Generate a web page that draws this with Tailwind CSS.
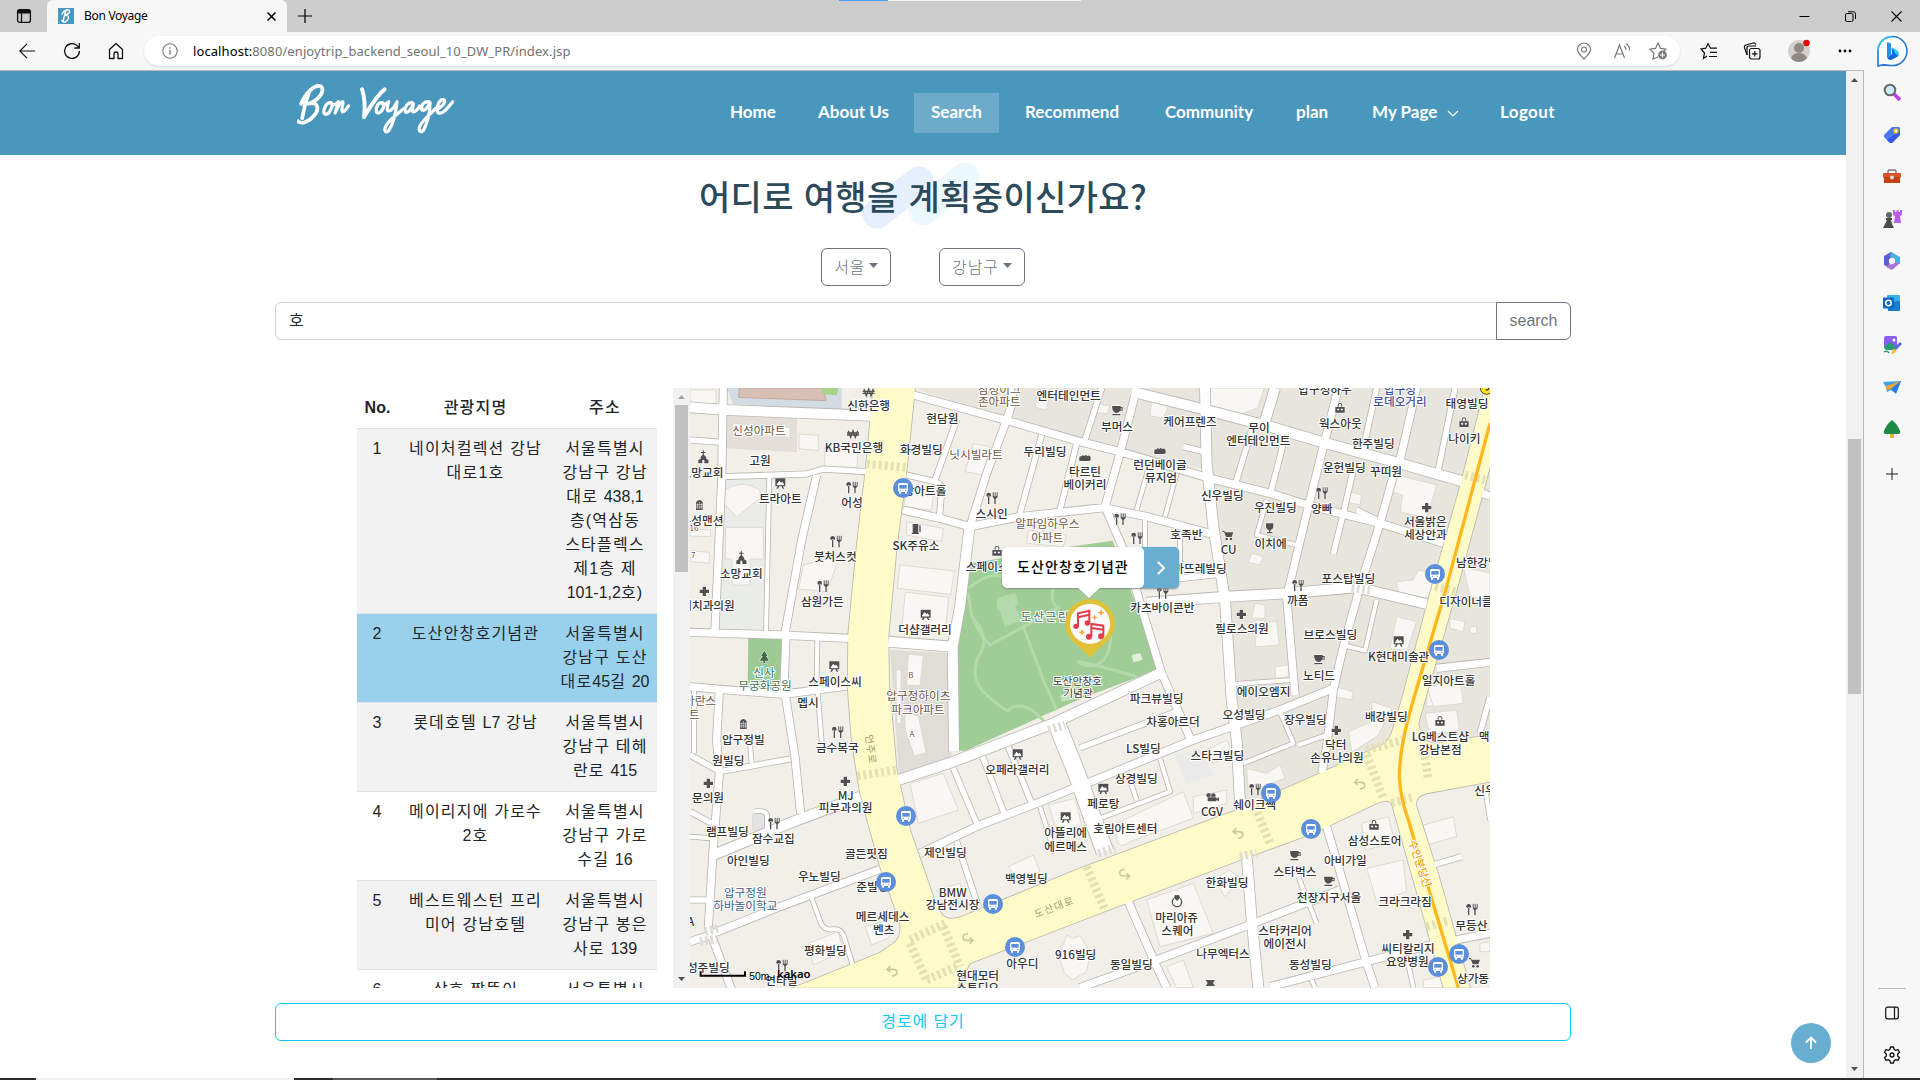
<!DOCTYPE html>
<html lang="ko">
<head>
<meta charset="utf-8">
<title>Bon Voyage</title>
<script src="https://cdn.jsdelivr.net/npm/@tailwindcss/browser@4"></script>
</head>
<body class="w-[1920px] h-[1080px] overflow-hidden bg-white flex flex-col font-['Liberation_Sans','Noto_Sans_CJK_KR',sans-serif] text-[#212529]">

<!-- tab strip -->
<div class="relative h-8 shrink-0 bg-[#cdcdcd] flex items-stretch">
  <div class="w-[47px] flex items-center justify-center">
    <svg class="w-4 h-4" viewBox="0 0 16 16" fill="none" stroke="#111" stroke-width="1.3"><rect x="1.6" y="1.6" width="12.8" height="12.8" rx="2"/><path d="M2 3h12M2 4.5h12" stroke-width="2"/><path d="M5.5 5v9"/></svg>
  </div>
  <div class="w-[240px] bg-[#f7f7f7] rounded-t-md flex items-center pl-[11px] pr-[11px]">
    <div class="w-4 h-4 bg-[#4897bf] flex items-center justify-center">
      <svg class="w-4 h-4" viewBox="0 0 16 16" fill="none" stroke="#fff" stroke-width="1.4" stroke-linecap="round"><path d="M8 2 5 13M4 6C6 2 12 0 11.500 4 11 6 8 7 7 7.500c5-1 4 4 1 6-2 1-4 0-4-1"/></svg>
    </div>
    <span class="ml-[10px] text-[12px] tracking-[-0.3px] font-['Noto_Sans',sans-serif] text-black">Bon Voyage</span>
    <svg class="ml-auto w-[9px] h-[9px]" viewBox="0 0 9 9" stroke="#000" stroke-width="1.5"><path d="M.5.500l8 8M8.500.500l-8 8"/></svg>
  </div>
  <div class="w-[35px] flex items-center justify-center"><svg class="w-[14px] h-[14px]" viewBox="0 0 14 14" stroke="#000" stroke-width="1.200"><path d="M7 0v14M0 7h14"/></svg></div>
  <div class="absolute left-[839px] top-0 flex h-px"><div class="w-[49px] bg-[#4a9df0]"></div><div class="w-[193px] bg-[#f3f3f3]"></div></div>
  <div class="ml-auto flex items-center gap-[35px] pr-[18px]">
    <svg class="w-[11px] h-[11px]" viewBox="0 0 11 11" stroke="#000"><path d="M.5 5.500h10"/></svg>
    <svg class="w-[11px] h-[11px]" viewBox="0 0 11 11" fill="none" stroke="#000"><rect x=".5" y="2.500" width="7.500" height="8" rx="1.500"/><path d="M3 .8h5.500q2 0 2 2V8"/></svg>
    <svg class="w-[11px] h-[11px]" viewBox="0 0 11 11" stroke="#000" stroke-width="1.100"><path d="M.5.500l10 10M10.500.500l-10 10"/></svg>
  </div>
</div>

<div class="flex flex-1 min-h-0">
<div class="w-[1864px] flex flex-col">
  <!-- address bar -->
  <div class="h-[38px] shrink-0 bg-[#f7f7f7] flex items-center pl-[19px]">
    <svg class="w-4 h-4" viewBox="0 0 16 16" fill="none" stroke="#111" stroke-width="1.200"><path d="M16 8H.8M8 .8.800 8l7.200 7.200"/></svg>
    <svg class="w-[18px] h-[18px] ml-[28px]" viewBox="0 0 18 18" fill="none" stroke="#111" stroke-width="1.300"><path d="M16.400 9A7.400 7.400 0 1 1 14 3.600l2 2M16.300 1v5h-5"/></svg>
    <svg class="w-4 h-[18px] ml-[27px]" viewBox="0 0 16 18" fill="none" stroke="#111" stroke-width="1.300"><path d="M1.500 7.500 8 1.500l6.500 6V16.500H10v-5q0-1.500-2-1.500t-2 1.500v5H1.500Z" stroke-linejoin="round"/></svg>
    <div class="ml-[20px] h-[30px] w-[1536px] bg-white rounded-full flex items-center pl-[18px] pr-[13px] shadow-sm">
      <svg class="w-4 h-4" viewBox="0 0 16 16" fill="none" stroke="#777" stroke-width="1.100"><circle cx="8" cy="8" r="7.200"/><path d="M8 7v4.500M8 4.300v1.400" stroke-width="1.400"/></svg>
      <div class="ml-[15px] text-[13px] font-['Noto_Sans',sans-serif] text-[#727272] tracking-[0.09px] pt-px"><span class="text-black">localhost:</span>8080/enjoytrip_backend_seoul_10_DW_PR/index.jsp</div>
      <svg class="ml-auto w-4 h-[18px]" viewBox="0 0 16 18" fill="none" stroke="#777" stroke-width="1.200"><path d="M8 17C4 13 1.500 10.500 1.500 7.500a6.500 6.500 0 0 1 13 0C14.500 10.500 12 13 8 17Z"/><circle cx="8" cy="7.500" r="2.500"/></svg>
      <svg class="ml-[21px] w-[18px] h-[18px]" viewBox="0 0 18 18" fill="none" stroke="#777" stroke-width="1.200"><path d="M1.500 16 6.500 3l5 13M3 12h7M11 4q2 1.500 2 4M13 1.500q4 2.500 3.500 7"/></svg>
      <svg class="ml-[18px] w-[18px] h-[18px]" viewBox="0 0 18 18" fill="none" stroke="#777" stroke-width="1.200"><path d="M9 15 4 17l1-5.500L1 7.200l5.500-.8L9 1l2.500 5.400 5.500.8-2 2"/><circle cx="13.500" cy="13" r="4.400" fill="#777" stroke="none"/><path d="M13.500 10.500v5M11 13h5" stroke="#fff"/></svg>
    </div>
    <svg class="ml-[20px] w-[18px] h-[18px]" viewBox="0 0 18 18" fill="none" stroke="#111" stroke-width="1.200"><path d="M7 14 3.500 16.500l1-5.500L1 7l4.800-.8L8 1.500l2.500 4.700h6.500M10 10.300h7M9 14.500h8"/></svg>
    <svg class="ml-[25px] w-[18px] h-[18px]" viewBox="0 0 18 18" fill="none" stroke="#111" stroke-width="1.200"><path d="M4 13 1.500 5.500Q1 3.500 3 3l7-2q2-.5 2.700 1.500"/><path d="M4 13V6q0-2 2-2h7"/><rect x="6.500" y="6.500" width="10.500" height="10.500" rx="2"/><path d="M11.800 9v5.500M9 11.800h5.500"/></svg>
    <svg class="ml-[26px] w-[24px] h-[24px]" viewBox="0 0 24 24"><circle cx="12" cy="12" r="11" fill="#d4d0cc"/><circle cx="12" cy="9" r="5" fill="#8e8984"/><path d="M4 19q2-5 8-5t8 5q-3 4-8 4t-8-4Z" fill="#8e8984"/><circle cx="19.500" cy="4" r="3.300" fill="#e00b0b"/></svg>
    <svg class="ml-[27px] w-[14px] h-1" viewBox="0 0 14 4"><circle cx="2" cy="2" r="1.400"/><circle cx="7" cy="2" r="1.400"/><circle cx="12" cy="2" r="1.400"/></svg>
  </div>

  <div class="flex flex-1 min-h-0 border-t border-r border-[#b9b9b9]">
    <!-- page -->
    <div class="relative w-[1846px] bg-white flex flex-col items-center">
      <header class="h-[84px] w-full shrink-0 bg-[#4a97be] flex items-center pl-[297px] text-white">
        <svg class="w-[165px] h-[56px] -mt-[2px]" viewBox="0 0 160 54" fill="none" stroke="#fff" stroke-width="3.100" stroke-linecap="round" stroke-linejoin="round">
          <path d="M12 7Q7 20 5 33M4 19C8 9 17 0 23 2c5 4-2 14-12 17C21 16 22 25 16 31 11 37 4 39 1 36" stroke-width="3.600"/>
          <path d="M33 18c-4-1-7 5-7 9 0 3 4 3 6-1 2-3 3-7 1-8 1 3 5 2 7-1-1 4-2 8-3 11 2-5 4-10 7-11 2 0-2 9 0 10 2 0 4-3 6-6"/>
          <path d="M63 5c3 8 3 18 2 27C71 22 77 11 85 5" stroke-width="3.800"/>
          <path d="M82 18c-4 0-6 6-5 9 2 3 7-2 7-6 0-2-1-3-2-3 2 3 5 1 7-1-2 5-2 9 0 9 3 0 6-5 8-9-1 10-4 22-8 28-3 3-5 0-3-4 3-7 12-12 17-17"/>
          <path d="M112 18c-5-1-8 5-7 9 3 2 6-4 8-8-1 4-2 8 0 8 3-1 5-4 6-6M128 17c-5-1-8 4-7 8 3 2 6-3 8-7 0 10-3 20-6 26-2 4-6 2-4-3 3-7 11-12 16-18M137 24c5-3 8-8 5-9-4-1-8 9-5 13 4 2 10-6 14-11"/>
        </svg>
        <nav class="flex items-center font-bold text-[17px] font-['Lato','Liberation_Sans',sans-serif] whitespace-nowrap ml-[252px] h-10">
          <a class="w-[104px] pl-4 -mt-[2px]">Home</a>
          <a class="w-[96px] -mt-[2px]">About Us</a>
          <a class="w-[85px] h-10 flex items-center justify-center bg-white/20 pb-[2px]">Search</a>
          <a class="w-[166px] pl-[26px] -mt-[2px]">Recommend</a>
          <a class="w-[131px] -mt-[2px]">Community</a>
          <a class="w-[76px] -mt-[2px]">plan</a>
          <a class="w-[128px] flex items-center gap-[10px] -mt-[2px]">My Page
            <svg class="w-3 h-2 mt-1" viewBox="0 0 12 8" fill="none" stroke="#fff" stroke-width="1.200"><path d="M1 1l5 5 5-5"/></svg></a>
          <a class="-mt-[2px] tracking-[.4px]">Logout</a>
        </nav>
      </header>

      <div class="relative mt-[17px] h-12 flex items-center justify-center">
        <svg class="absolute left-[160px] -top-[4px] w-[130px] h-[68px] overflow-visible" viewBox="0 0 130 68" stroke-linecap="round" stroke-width="29"><path d="M18 46 60 13" stroke="#e6effd"/><path d="M64 43 106 9" stroke="#e9f7fe" stroke-opacity=".9"/></svg>
        <h2 class="relative text-[34px] leading-[48px] font-medium tracking-[.35px] text-[#2c4a5a] whitespace-nowrap font-['Noto_Sans_CJK_KR',sans-serif]">어디로 여행을 계획중이신가요?</h2>
      </div>

      <div class="mt-[28px] flex gap-12 self-start ml-[821px] text-[#6c757d]">
        <button class="h-[38px] w-[70px] border border-[#6c757d] rounded-md flex items-center justify-center gap-1"><span class="font-light tracking-[.5px] -mt-[3px] font-['Noto_Sans_CJK_KR',sans-serif]">서울</span><svg class="w-[9px] h-[5px] -mt-[3px]" viewBox="0 0 9 5" fill="#6c757d"><path d="M0 0h9L4.500 5Z"/></svg></button>
        <button class="h-[38px] w-[86px] border border-[#6c757d] rounded-md flex items-center justify-center gap-1"><span class="font-light tracking-[.9px] -mt-[3px] font-['Noto_Sans_CJK_KR',sans-serif]">강남구</span><svg class="w-[9px] h-[5px] -mt-[3px]" viewBox="0 0 9 5" fill="#6c757d"><path d="M0 0h9L4.500 5Z"/></svg></button>
      </div>

      <div class="mt-4 w-[1296px] h-[38px] flex">
        <div class="flex-1 border border-[#ced4da] rounded-l-md pl-[13px] flex items-center">호</div>
        <div class="w-[75px] -ml-px border border-[#6c757d] text-[#6c757d] rounded-r-md flex items-center justify-center">search</div>
      </div>

      <div class="mt-12 flex w-[1133px] h-[600px] self-start ml-[357px]">
        <!-- places -->
        <div class="w-[300px] h-full overflow-hidden">
          <table class="w-[300px] table-fixed border-collapse text-center text-[16px] leading-6 tracking-[1.2px] whitespace-nowrap">
            <colgroup><col class="w-[41px]"><col class="w-[155px]"><col class="w-[104px]"></colgroup>
            <thead><tr class="h-[40px] border-b border-[#dee2e6]"><th class="tracking-normal">No.</th><th class="font-medium">관광지명</th><th class="font-medium">주소</th></tr></thead>
            <tbody class="align-top font-normal">
              <tr class="h-[185px] bg-[#f2f2f2] border-b border-[#dee2e6]"><td class="pt-2">1</td><td class="pt-2">네이처컬렉션 강남<br>대로1호</td><td class="pt-2">서울특별시<br>강남구 강남<br>대로 <span class="tracking-normal">438,1</span><br>층(역삼동<br>스타플렉스<br>제1층 제<br><span class="tracking-normal">101-1,2</span>호)</td></tr>
              <tr class="h-[89px] bg-[#99d1ec] border-b border-[#dee2e6]"><td class="pt-2">2</td><td class="pt-2">도산안창호기념관</td><td class="pt-2">서울특별시<br>강남구 도산<br>대로<span class="tracking-normal">45</span>길 <span class="tracking-normal">20</span></td></tr>
              <tr class="h-[89px] bg-[#f2f2f2] border-b border-[#dee2e6]"><td class="pt-2">3</td><td class="pt-2">롯데호텔 <span class="tracking-normal">L7</span> 강남</td><td class="pt-2">서울특별시<br>강남구 테헤<br>란로 <span class="tracking-normal">415</span></td></tr>
              <tr class="h-[89px] border-b border-[#dee2e6]"><td class="pt-2">4</td><td class="pt-2">메이리지에 가로수<br>2호</td><td class="pt-2">서울특별시<br>강남구 가로<br>수길 <span class="tracking-normal">16</span></td></tr>
              <tr class="h-[89px] bg-[#f2f2f2] border-b border-[#dee2e6]"><td class="pt-2">5</td><td class="pt-2">베스트웨스턴 프리<br>미어 강남호텔</td><td class="pt-2">서울특별시<br>강남구 봉은<br>사로 <span class="tracking-normal">139</span></td></tr>
              <tr class="h-[89px]"><td class="pt-2">6</td><td class="pt-2">상호 짬뚱이</td><td class="pt-2">서울특별시</td></tr>
            </tbody>
          </table>
        </div>
        <div class="ml-4 w-[17px] h-full bg-[#f1f1f1] flex flex-col items-center">
          <svg class="w-[17px] h-[17px]" viewBox="0 0 17 17" fill="#a3a3a3"><path d="M5 11h7L8.500 7Z"/></svg>
          <div class="w-[13px] h-[167px] bg-[#c1c1c1]"></div>
          <svg class="mt-auto w-[17px] h-[17px]" viewBox="0 0 17 17" fill="#505050"><path d="M5 6h7l-3.500 4Z"/></svg>
        </div>

        <!-- map -->
        <div class="relative w-[800px] h-[600px]">
        <svg class="w-[800px] h-[600px] block" viewBox="30 24 2400 1800">
          <defs>
            <g id="r12"><path d="M268 290 258 755M412 780l-2 120 15 185M210 1090l5 60M30 1370l65 5M395 1555l28 75q12 22 35 18 25-4 34 22l26 85M225 1294q40-6 36 20v55M1410 250l-40 140M1490 280l-35 130M1395 420v80M1500 470v120M1760 360l-30 105 120 30M2090 660l-35 152-55-14M1660 912l180-12M1800 995l40 95-150 60M1855 1095l85-30M1440 1135l30 100-210 80M1350 1200l20 60M1080 1280l35 110M1855 1490l55 140M42 920v200M2180 1730l20 93M1505 590l115-8M1895 1800l10 23M2415 1220l15 100"/></g>
            <g id="r16"><path d="M30 180l95 7M130 290l250-8 50-15 130 8M30 1125l90 50 210-38M30 1295l65 35M30 1560h60M830 120l-65 180M680 285l85 20q22 8 20 25l-7 85M1085 165l-65 235M1190 190l-50 200M1265 24l-50 156M1510 200l70 17M1715 150l-48 160M1810 190l-37 145M2090 24l-42 190M2325 24l-50 246M2022 260l-32 140-30 122M1200 1103l300-112M1320 615l300-32M820 1165l72 170M908 1130l66 175M985 1100l70 170M830 1385l65 195M2430 950l-30 110M2260 1455l85-25M1265 1345l-50-30M2090 420l-60-30"/></g>
            <g id="r22"><path d="M130 24 125 300 105 750M410 285 365 480 315 760M30 757l270 8 210 10M318 770l-6 150 33 210 17 170M30 920l90 8 190 15 190-25M118 930l-8 150 8 100-18 220-15 240 70 190M30 1685l45-15 225-90 300-112M700 45l275 75 225 65 120 30 270 80 180 45 130 40 200 50 190 60M990 24l10 35-20 61-60 160-50 160M670 390l110 25 90 25 150-30 260-28M1365 45l-45 175-45 160 60 140 110 360 90 205M1280 385l120 25 200 53M1975 24l-45 176-45 180-65 270 25 295M2210 24l-50 216M2145 270l-45 160-60 190-50 180-30 130-20 170-15 80M1220 1210l320-130 260-90 160-65M720 1420l180-85 170-65 110-45M1345 1565l85 195 30 63M1200 1823l230-83 290-110 260-100M1940 1340l50 170 70 240 25 73M1770 1820l290-75 190-50 180-35M2270 865l160-18M2405 340l25 8"/></g>
            <g id="r30"><path d="M30 82l110 8 435 17M100 1425l240-100 200-75M868 445l-28 235-22 120 4 315M625 785l195 15M655 1200l165-55 300-115 320-150M1575 24l5 226 20 190 35 220 20 300 15 120 10 190M1355 35l225 55 190 50 170 50 220 60 190 55M1785 24l-30 100M1400 668l240-18 180-10 210-18 210 50M1700 1425l15 195 20 203"/></g>
            <g id="r50"><path d="M1130 1030l60 150 50 140 35 95"/></g>
            <path id="vroad" d="M580 24 557 270 530 500 505 760 503 920 515 1080 540 1240 600 1460 658 1620Q670 1670 640 1690L600 1718 340 1823H830L870 1750 1260 1600 1680 1440 1900 1360 2090 1270Q2125 1255 2135 1270L2200 1500 2290 1823H2370L2280 1500 2208 1275Q2205 1250 2240 1240L2430 1205V1065L2270 1090Q2225 1095 2215 1030L2235 960 2330 630 2430 260V24H2415L2340 320 2250 640 2165 960 2135 1060Q2120 1095 2090 1102L1920 1180 1670 1290 1200 1465 850 1608Q800 1630 780 1595L760 1550 690 1350 650 1170 627 910 625 770 650 500 680 270 705 24Z"/>
            <g id="fk"><circle cx="-9" cy="-9" r="7"/><path d="M-11-5h4v23h-4ZM3-17h3v12h3v-12h3v12h3v-12h3v14l-6 6v15H8V3L3-3Z"/></g>
            <g id="cr"><path d="M-5-14H5v9h9V5H5v9H-5V5h-9V-5h9Z"/></g>
            <g id="ar"><path d="M-15-14H15V10H8l4 7H7L3 10H-3l-4 7h-5l4-7h-7Z"/><path d="M-10 5l7-10 5 6 4-3 4 7Z" fill="#fff"/></g>
            <g id="cf"><path d="M-15-14H11v3h6v11H9Q6 7-2 7q-12 0-13-21ZM11-7v4h3v-4ZM-14 10H10v4h-24Z" fill-rule="evenodd"/></g>
            <g id="bg"><path d="M-14-3H14V14H-14ZM-7-4v-4q0-7 7-7t7 7v4H4v-4q0-4-4-4t-4 4v4Z"/><path d="M-7 3h3v3h-3ZM4 3h3v3H4Z" fill="#fff"/></g>
            <g id="br"><path d="M-17 8q-2-16 7-13 2-6 8-1 5-6 8 0 10-4 11 6 1 9-5 9h-27Z"/></g>
            <g id="ch"><path d="M-1.500-20h3v5h5v3h-5v5l7 7v5l7 4v10H3V9h-6v10h-12V9l7-4V0l6-7v-5h-5v-3h5Z"/></g>
            <g id="bd"><path d="M-10 15V-8q10-14 20 0V15Z"/><path d="M-6-5v17M0-9v21M6-5v17M-10-1h20M-10 6h20" stroke="#fff" stroke-width="1.500"/></g>
            <g id="ct"><path d="M-17-14h6l2 5h25L11 5H-6L-12-10h-5Z"/><circle cx="-4" cy="11" r="4"/><circle cx="9" cy="11" r="4"/></g>
            <path id="wn" d="M-14-11-7 9 0-11 7 9 14-11M-18-4h36M-18 2h36" fill="none" stroke="#505050" stroke-width="4"/>
            <g id="bus"><circle r="30" fill="#5b8fdc"/><rect x="-15" y="-15" width="30" height="27" rx="5" fill="#fff"/><path d="M-11-9h22V2h-22Z" fill="#5b8fdc"/><path d="M-12 10h6v7h-6ZM6 10h6v7H6Z" fill="#fff"/><circle cx="-8" cy="7" r="2" fill="#5b8fdc"/><circle cx="8" cy="7" r="2" fill="#5b8fdc"/></g>
            <path id="ut" d="M-14-5H4Q17-5 16 5 15 14 1 15M-4-15-14-5-4 3" fill="none" stroke="#cfc99a" stroke-width="5"/>
          </defs>
          <rect x="30" y="24" width="2400" height="1800" fill="#f2efe9"/>
          <path d="M700 24H2430V1070L1680 1270 1635 660 1580 270 1330 215 985 120 900 90Z" fill="#e8e5dd"/>
          <path d="M140 24H485V90L160 72Z" fill="#d3dce3"/><path d="M178 24H430l8 38-262-10Z" fill="#d8c1b4" stroke="#c4a99a" stroke-width="3"/><path d="M425 24h50l-5 22-42-4Z" fill="#a7d487"/>
          <path d="M140 100l211 12v105L138 205Z" fill="#e3dfd8"/><path d="M132 300l133-8-8 460-142-8Z" fill="#e9ece8"/>
          <path d="M630 810l170 8 15 315-158 50Z" fill="#e0ddd5"/>
          <path d="M205 768l100 8-5 160-97-12Z" fill="#9dcb93"/>
          <path d="M1485 1130l75-25 40 80-80 26Z" fill="#e9eae9"/>

          <g fill="#f8f7f4" stroke="#dedad2" stroke-width="3">
            <path d="M30 30h78v40l-78 6ZM158 130l172 12v30l-172-9ZM357 162l58 4v46l-58-6ZM434 200l98 5v58l-98-4ZM135 330q50-35 105 0v25l-70 56-37-40ZM137 442h113v95h-40v78h-54v-78h-20ZM30 445l62 5v20l-62-2ZM30 512l58 5v32l-58-4ZM370 555l80-20 20 20-30 80-84-8ZM660 555l164 18-12 70-160-18ZM676 636l130 16-10 100-130-16ZM680 330l80 10-5 50-85-8ZM680 425l110 20-5 40-105-20ZM880 190l50 10-20 85-55-10ZM1070 50l35 10-5 30-35-8ZM1045 450l115 15-10 35-110-10ZM1250 70l40 8-10 24-32-6ZM1415 60l50 20-15 35-40-8Z"/>
            <path d="M1583 24h170l-20 60-60 22-90-25ZM2150 285l120 30-30 100-80-20 8-50-50-15ZM2010 335l35 10-5 30-35-8ZM1715 520l35 10-10 25-35-8ZM1725 670l30 5v40h-40ZM1725 720l65 5 8 70-72 6ZM1785 860l40-5v35l-38 5ZM2150 605l50-5 15-30 60 15-30 70-90-10ZM2150 710l60 15-30 90-50-10ZM2310 715l45 10-5 30-40-10ZM1970 920l50 15-5 25-50-10ZM2240 920l95-20 5 70-100 10ZM2350 560l80 20v80l-60-10ZM2370 740h20v20h-20Z"/>
            <path d="M2005 1055l70-30v-60l60 20-40 80-60 40-20 10ZM1700 1165l60 15 40-25 15 40-110 40ZM1580 1110l60-30 20 40-60 30ZM1310 1330l200-95 30 80-190 70q-30 25-40-5ZM1540 1250l100-20v40l-100 30ZM690 1210l100-30 45 110-120 40ZM1105 1275l80-20 20 80-70 30ZM985 1460l75-35 20 50-60 40ZM1400 1560l140-50 60 150-160 40ZM1605 1500l40-30 50 30-35 20-25 30ZM2045 1330l80-20 20 80-90 20ZM2060 1465l110-25 10 95-90 30ZM2230 1335l90-25 10 60-90 25ZM1460 1760l50-20 30 83h-50ZM2240 920l100-20 10 70-90 10ZM2235 1000l95-10 8 60-90 15ZM385 1690l90-35 15 60-90 40ZM555 1640l90-25-20 60-50 20ZM1160 1665l20 10 20-8 18 30 15 20-15 60-20 10-20 12-25-20-15-45 10-35ZM770 1530l70-20 10 40-60 20ZM2230 1800l50-10 10 33h-60ZM2400 1690l30-5v30h-30Z"/>
            <path d="M218 1302l35-4v60l-35-10Z" fill="#e4e3e4"/>
            <path d="M685 822l45 5-10 90-40-2ZM675 1000l40 8 15 70 8 40-35 10-28-80ZM648 870h15v160h-12Z"/>
          </g>
          <path d="M872 550 1170 500l128-18 140 385-238 90-332 150q-30 14-34-6l-8-240 15-160Z" fill="#9fcd95"/>
          <g fill="none" stroke="#b4d9ab" stroke-width="9"><path d="M865 625q60-50 100-35M865 640l10 70q60 60 20 120-30 70 30 120t60 40q50-40 120 50M880 720q30 60 50 75L1140 680M1030 740l60 160 40 90M1290 720q10 90-20 120t-70 10 170 40M1120 610q-10 60 10 70"/></g>
          <path d="M950 655l55-17 12 35-12 4 20 45-50 18-15-45-8-6Z" fill="#b4d9ab"/><path d="M1355 825l25-6 8 20-28 8Z" fill="#e2efdd"/><path d="M1140 945l60-20v30l-55 10Z" fill="#c2dfbb"/>

          <g fill="none" stroke="#b9b7b0" stroke-linejoin="round"><use href="#r12" stroke-width="17"/><use href="#r16" stroke-width="21"/><use href="#r22" stroke-width="27"/><use href="#r30" stroke-width="35"/><use href="#r50" stroke-width="56"/></g>
          <use href="#vroad" fill="none" stroke="#b9b7b0" stroke-width="5"/>
          <g fill="none" stroke="#fff" stroke-linejoin="round"><use href="#r12" stroke-width="12"/><use href="#r16" stroke-width="16"/><use href="#r22" stroke-width="22"/><use href="#r30" stroke-width="30"/><use href="#r50" stroke-width="51"/></g>
          <use href="#vroad" fill="#fffbc9"/>
          <g fill="none" stroke="#e5e0b4" stroke-width="26" stroke-dasharray="9 9"><path d="M560 252l118 10M532 1188l118-18M690 1680l105-50M690 1690l50 110M790 1640l50 120M740 1800l90-40M1220 1460l55 130M1725 1280l45 110M2060 1125l50 130M2060 1110l110-30M2235 1130l10 70M2135 1270l70-20M2355 285l60 15M2265 620l60 15M2240 1640l70-20" /></g>
          <g fill="none" stroke="#dedcd6" stroke-width="26" stroke-dasharray="8 8"><path d="M1105 1050l50-15M1255 1420l50-15M1680 1430l50-10M75 1655l40-10M60 1685l50-8M2015 622l60 10"/></g>
          <use href="#ut" transform="translate(865 1676) rotate(180)"/><use href="#ut" x="635" y="1773"/><use href="#ut" transform="translate(1335 1483) rotate(180)"/><use href="#ut" x="1673" y="1360"/><use href="#ut" x="2038" y="1212"/>
          <path d="M2430 130 2300 620 2200 960Q2158 1100 2158 1190 2160 1250 2185 1320L2250 1540 2335 1823" fill="none" stroke="#ffb81c" stroke-width="10"/>
          <circle cx="2420" cy="24" r="19" fill="#ffe11a" stroke="#444" stroke-width="3"/>
          <path d="M2413 22q14-6 13 2t-9 5" fill="none" stroke="#333" stroke-width="4"/>

          <g fill="#505050" stroke="#fff" stroke-width="3" paint-order="stroke">
            <use href="#wn" x="566" y="38"/><use href="#wn" x="519" y="163"/>
            <use href="#fk" x="515" y="322"/><use href="#fk" x="467" y="484"/><use href="#fk" x="428" y="618"/><use href="#fk" x="935" y="354"/><use href="#fk" x="472" y="1056"/><use href="#fk" x="281" y="1330"/><use href="#fk" x="305" y="1756"/><use href="#fk" x="1319" y="417"/><use href="#fk" x="1370" y="474"/><use href="#fk" x="1447" y="638"/><use href="#fk" x="1925" y="339"/><use href="#fk" x="1853" y="616"/><use href="#fk" x="1724" y="1228"/><use href="#fk" x="2375" y="1588"/>
            <use href="#cr" x="73" y="634"/><use href="#cr" x="85" y="1210"/><use href="#cr" x="496" y="1204"/><use href="#cr" x="1684" y="703"/><use href="#cr" x="2240" y="383"/><use href="#cr" x="1969" y="1051"/><use href="#cr" x="2183" y="1664"/>
            <use href="#ar" x="301" y="309"/><use href="#ar" x="737" y="703"/><use href="#ar" x="463" y="858"/><use href="#ar" x="1013" y="1122"/><use href="#ar" x="1157" y="1311"/><use href="#ar" x="2156" y="783"/><use href="#ar" x="1270" y="1225"/>
            <use href="#cf" x="1311" y="92"/><use href="#cf" x="1917" y="839"/><use href="#cf" x="1845" y="1427"/><use href="#cf" x="1947" y="1504"/>
            <use href="#bg" x="951" y="513"/><use href="#bg" x="1980" y="84"/><use href="#bg" x="2352" y="127"/><use href="#bg" x="2280" y="1023"/><use href="#bg" x="2082" y="1335"/>
            <use href="#br" x="1215" y="234"/><use href="#br" x="1440" y="213"/>
            <use href="#ch" x="70" y="231"/><use href="#ch" x="184" y="533"/><use href="#bd" x="58" y="375"/><use href="#bd" x="190" y="1032"/>
            <use href="#ct" x="1644" y="466"/><use href="#ct" x="2384" y="1748"/>
            <path d="M1758 430h22v12q-2 8-9 9v5h6v4h-16v-4h6v-5q-7-1-9-9Z"/>
            <path d="M253 812l10 16h-5l9 14h-11v8h-6v-8h-11l9-14h-5Z" fill="#43684a"/>
            <path d="M698 432h17v27h2v3h-22v-3h3Z"/><path d="M718 434l4 3v20h-4Z"/>
            <circle cx="1586" cy="1246" r="7"/><circle cx="1600" cy="1247" r="7"/><path d="M1583 1252h26v12h-26ZM1609 1256l8-4v12l-8-4Z"/>
            <circle cx="1491" cy="1566" r="14" fill="none" stroke="#505050" stroke-width="4"/><path d="M1491 1563l-9-10 3-8h5l1 3 1-3h5l3 8Z"/>
            <path d="M1577 1800h28l-6 9 6 9h-28l6-9Z"/>
          </g>

          <g font-family="'Noto Sans CJK KR',sans-serif" font-size="35" font-weight="500" text-anchor="middle" dominant-baseline="central" fill="#333" stroke="#fff" stroke-width="6" stroke-linejoin="round" paint-order="stroke">
            <g fill="#6e543e" font-weight="400">
              <text x="237" y="148">신성아파트</text><text x="958" y="24">참성이그</text><text x="958" y="61">존아파트</text><text x="888" y="219">닛시빌라트</text><text x="1102" y="427">알파임하우스</text><text x="1102" y="468">아파트</text><text x="715" y="943">압구정하이츠</text><text x="714" y="985">파크아파트</text><text x="60" y="958">아란스</text><text x="43" y="1001">트</text><text x="693" y="883" font-size="24">B</text><text x="696" y="1061" font-size="24">A</text><text x="42" y="443" font-size="24">16</text><text x="40" y="523" font-size="24">7</text>
            </g>
            <g fill="#47704f" font-weight="400"><text x="252" y="874">신사</text><text x="255" y="913">무궁화공원</text><text x="1134" y="706" letter-spacing="5">도산근린공원</text></g>
            <g fill="#425f86" font-weight="400"><text x="196" y="1535">압구정원</text><text x="196" y="1574">하바놀이학교</text></g>
            <g fill="#4450a0"><text x="2160" y="24">압구정</text><text x="2160" y="62">로데오거리</text></g>
            <text x="566" y="74">신한은행</text><text x="522" y="200">KB국민은행</text><text x="240" y="239">고원</text><text x="66" y="275">소망교회</text><text x="66" y="419">유성맨션</text><text x="301" y="352">트라아트</text><text x="516" y="364">어성</text><text x="466" y="527">붓처스컷</text><text x="184" y="578">소망교회</text><text x="84" y="674">미치과의원</text><text x="427" y="662">삼원가든</text><text x="465" y="902">스페이스씨</text><text x="787" y="112">현담원</text><text x="724" y="206">화경빌딩</text><text x="735" y="328">강아트홀</text><text x="708" y="492">SK주유소</text><text x="735" y="745">더샵갤러리</text><text x="935" y="398">스시인</text><text x="938" y="556">스페이스타</text><text x="1095" y="212">두리빌딩</text><text x="1166" y="43">엔터테인먼트</text><text x="1215" y="272">타르틴</text><text x="1215" y="310">베이커리</text>
            <text x="1311" y="136">부머스</text><text x="1530" y="122">케어프렌즈</text><text x="1737" y="139">무이</text><text x="1735" y="179">엔터테인먼트</text><text x="1440" y="250">런던베이글</text><text x="1443" y="290">뮤지엄</text><text x="1627" y="343">신우빌딩</text><text x="1786" y="380">우진빌딩</text><text x="1519" y="461">호족반</text><text x="1646" y="506">CU</text><text x="1772" y="487">이치에</text><text x="1560" y="562">마뜨레빌딩</text><text x="1447" y="680">카츠바이콘반</text><text x="1853" y="659">까폼</text><text x="1686" y="742">필로스의원</text><text x="1935" y="24">압구정하우</text><text x="1981" y="128">웍스아웃</text><text x="2361" y="67">태영빌딩</text><text x="2353" y="171">나이키</text><text x="2080" y="188">한주빌딩</text><text x="1993" y="260">운헌빌딩</text><text x="2118" y="271">꾸띠원</text><text x="1925" y="382">양빠</text><text x="2236" y="422">서울밝은</text><text x="2236" y="461">세상안과</text><text x="2005" y="593">포스탑빌딩</text><text x="2392" y="545">남한강빌</text><text x="2358" y="661">디자이너클</text><text x="1951" y="760">브로스빌딩</text><text x="2156" y="827">K현대미술관</text><text x="1917" y="884">노티드</text><text x="2306" y="899">일지아트홀</text><text x="1751" y="931">에이오엠지</text><text x="1430" y="952">파크뷰빌딩</text>
            <g font-size="32" font-weight="400" fill="#333"><text x="1192" y="902">도산안창호</text><text x="1194" y="937">기념관</text></g>
            <text x="384" y="965">멥시</text><text x="190" y="1076">압구정빌</text><text x="145" y="1139">원빌딩</text><text x="472" y="1100">금수복국</text><text x="84" y="1250">문의원</text><text x="497" y="1244">MJ</text><text x="497" y="1280">피부과의원</text><text x="142" y="1351">램프빌딩</text><text x="280" y="1373">잠수교집</text><text x="205" y="1438">아인빌딩</text><text x="559" y="1418">골든핏짐</text><text x="418" y="1487">우노빌딩</text><text x="577" y="1517">준빌딩</text><text x="608" y="1606">메르세데스</text><text x="611" y="1645">벤츠</text><text x="436" y="1708">평화빌딩</text><text x="85" y="1759">성주빌딩</text><text x="304" y="1799">연타빌</text><text x="796" y="1414">제인빌딩</text><text x="818" y="1535">BMW</text><text x="818" y="1571">강남전시장</text><text x="1012" y="1165">오페라갤러리</text><text x="1157" y="1354">아뜰리에</text><text x="1157" y="1396">에르메스</text><text x="1039" y="1492">백영빌딩</text><text x="1027" y="1748">아우디</text><text x="893" y="1784">현대모터</text><text x="893" y="1818">스튜디오</text><text x="1187" y="1721">916빌딩</text>
            <text x="1479" y="1022">차홍아르더</text><text x="1390" y="1103">LS빌딩</text><text x="1612" y="1122">스타크빌딩</text><text x="1692" y="1001">오성빌딩</text><text x="1876" y="1015">장우빌딩</text><text x="2119" y="1007">배강빌딩</text><text x="2281" y="1067">LG베스트샵</text><text x="2281" y="1106">강남본점</text><text x="2412" y="1067">맥</text><text x="1967" y="1091">닥터</text><text x="1971" y="1130">손유나의원</text><text x="1369" y="1193">상경빌딩</text><text x="1270" y="1267">페로탕</text><text x="1596" y="1292">CGV</text><text x="1724" y="1271">쉐이크쌕</text><text x="1336" y="1342">호림아트센터</text><text x="2415" y="1229">신우</text><text x="2084" y="1379">삼성스토어</text><text x="1845" y="1471">스타벅스</text><text x="1996" y="1438">아비가일</text><text x="1947" y="1550">천장지구서울</text><text x="2175" y="1560">크라크라짐</text><text x="1641" y="1505">한화빌딩</text><text x="1490" y="1610">마리아쥬</text><text x="1492" y="1649">스퀘어</text><text x="1815" y="1649">스타커리어</text><text x="1815" y="1688">에이전시</text><text x="1629" y="1716">나무엑터스</text><text x="1354" y="1749">동일빌딩</text><text x="1891" y="1751">동성빌딩</text><text x="2374" y="1632">무등산</text><text x="2184" y="1703">씨티칼리지</text><text x="2182" y="1742">요양병원</text><text x="2379" y="1793">상가동</text><text x="32" y="1620">A</text>
            <g fill="#a59a68" stroke="none" font-size="30" font-weight="400"><text transform="translate(1122 1579) rotate(-21)" letter-spacing="4">도산대로</text><text transform="translate(575 1108) rotate(82)" letter-spacing="2">언주로</text></g>
            <text transform="translate(2222 1450) rotate(72)" fill="#f3a000" font-size="32" font-weight="500">수인분당선</text>
          </g>
          <use href="#bus" x="669" y="324"/><use href="#bus" x="2265" y="582"/><use href="#bus" x="2277" y="810"/><use href="#bus" x="678" y="1308"/><use href="#bus" x="618" y="1506"/><use href="#bus" x="939" y="1572"/><use href="#bus" x="1005" y="1701"/><use href="#bus" x="1773" y="1239"/><use href="#bus" x="1893" y="1347"/><use href="#bus" x="2337" y="1722"/><use href="#bus" x="2274" y="1761"/>

          <path d="M62 1774v13h133v-13" fill="none" stroke="#000" stroke-width="6"/>
          <text x="208" y="1799" font-family="'Liberation Sans',sans-serif" font-size="31">50m</text>
          <text x="291" y="1795" font-family="'Noto Sans',sans-serif" font-size="34" font-weight="600">kakao</text>

          <!-- selected place pin -->
          <path d="M1155 732a75 75 0 1 1 150 0q0 35-35 62l-40 38-40-38q-35-27-35-62Z" fill="#dfc238"/>
          <circle cx="1230" cy="731" r="60" fill="#fafafa"/>
          <g fill="none" stroke="#e33d4a" stroke-width="6"><path d="M1194 741v-41l34-8v38M1194 712l34-8M1234 770v-38l36 5v33M1234 744l36 5"/></g>
          <g fill="#e33d4a"><circle cx="1188" cy="739" r="8"/><circle cx="1222" cy="729" r="8"/><circle cx="1227" cy="770" r="9"/><circle cx="1263" cy="769" r="9"/></g>
          <path d="M1244 704l3 6 6 2-6 3-3 6-3-6-6-3 6-2ZM1263 688l3 7 7 3-7 3-3 7-3-7-7-3 7-3ZM1206 747l3 7 6 3-6 3-3 7-3-7-6-3 6-3Z" fill="#f7a62b"/>
        </svg>
        <!-- place callout -->
        <div class="absolute left-[312px] top-[159px] h-[41px] w-[177px] flex rounded-[5px] bg-[#68aed1] shadow-[0_1px_2px_#888]">
          <div class="w-[142px] bg-white rounded-[5px] flex items-center pl-[15px] pb-[3px] text-[14px] font-medium tracking-[1.1px] text-black font-['Noto_Sans_CJK_KR',sans-serif] whitespace-nowrap">도산안창호기념관</div>
          <div class="w-[33px] flex items-center justify-center"><svg class="w-2 h-[14px]" viewBox="0 0 8 14" fill="none" stroke="#fff" stroke-width="2"><path d="M1 1l6 6-6 6"/></svg></div>
          <svg class="absolute left-[76px] top-[41px] w-[22px] h-[11px]" viewBox="0 0 22 11"><path d="M0 0h22L11 10.500Z" fill="#fff"/><path d="M0 0l11 10.500L22 0" fill="none" stroke="#999" stroke-opacity=".6"/></svg>
        </div>
        </div>
      </div>

      <button class="mt-[15px] w-[1296px] h-[38px] border border-[#0dcaf0] text-[#0dcaf0] rounded-md tracking-[.9px] font-normal">경로에 담기</button>

      <div class="absolute right-[15px] bottom-[15px] w-10 h-10 rounded-full bg-[#68aed1] flex items-center justify-center">
        <svg class="w-3 h-[14px]" viewBox="0 0 12 14" fill="none" stroke="#fff" stroke-width="1.800"><path d="M6 13V1.500M1 6.500l5-5 5 5"/></svg>
      </div>
    </div>
    <!-- page scrollbar -->
    <div class="w-[17px] bg-[#f1f1f1] flex flex-col items-center">
      <svg class="w-[17px] h-[17px]" viewBox="0 0 17 17" fill="#505050"><path d="M5 11h7L8.500 7Z"/></svg>
      <div class="mt-[351px] w-[13px] h-[255px] bg-[#c1c1c1]"></div>
      <svg class="mt-auto w-[17px] h-[17px]" viewBox="0 0 17 17" fill="#505050"><path d="M5 6h7l-3.500 4Z"/></svg>
    </div>
  </div>
</div>

<!-- browser sidebar -->
<aside class="w-14 bg-[#f7f7f7] flex flex-col items-center pt-[3px]">
  <svg class="w-8 h-8" viewBox="0 0 32 32"><path d="M2 31V16A14.500 14.500 0 1 1 16 30.500q-4 0-7-.6Q5 30 2 31Z" fill="#fff" stroke="#2876d8" stroke-width="1.600"/><path d="M2 15A14 14 0 0 1 16 1.800" fill="none" stroke="#35c5f0" stroke-width="1.600"/><path d="M11 7l4 1.500v11l-4 3Z" fill="#2293ec"/><path d="M11 22.500 16 19l-.5-6 6.500 3.500q2 4-2 6L15 25q-3 0-4-2.500Z" fill="#1566d8"/><path d="M16 12l6 4q2 3 0 5l-3-3Z" fill="#35cbe8"/></svg>
  <svg class="mt-4 w-[18px] h-[18px]" viewBox="0 0 18 18"><path d="M11 11l6 6" stroke="#c13bee" stroke-width="3.500"/><circle cx="7" cy="7" r="5.300" fill="#cdeafc" stroke="#6a6a6a" stroke-width="2"/></svg>
  <svg class="mt-[25px] w-[18px] h-[18px]" viewBox="0 0 18 18"><path d="M9 1h7l1 1v7l-8 8H7L1 11V9Z" fill="#4a78f3"/><path d="M17 5v4l-8 8H7l-3-3Z" fill="#3957e8"/><circle cx="13" cy="5" r="2" fill="#fff" stroke="#f4c020" stroke-width="1.400"/></svg>
  <svg class="mt-[24px] w-[18px] h-[18px]" viewBox="0 0 18 18"><path d="M5 5V3.500Q5 2 6.500 2h5Q13 2 13 3.500V5" fill="none" stroke="#777" stroke-width="1.400"/><rect y="5" width="18" height="5" rx="1" fill="#d9542a"/><path d="M1 9h16v6H1Z" fill="#c4400f"/><circle cx="9" cy="9.500" r="2" fill="#ddd"/></svg>
  <svg class="mt-[24px] w-[19px] h-[18px]" viewBox="0 0 19 18"><circle cx="6" cy="5" r="3" fill="#666"/><path d="M3 8h6v2H8l1 4 2 4H0l2-4 2-4H3Z" fill="#4b4b4b"/><path d="M10 0h2v2h1.500V0h2v2H17V0h2v5l-2 1 1 7h-7l1-7-2-1Z" fill="#bb5cf1"/></svg>
  <svg class="mt-[24px] w-[18px] h-[18px]" viewBox="0 0 18 18"><path d="M8 0 1 4v9l4 2 2-4V7l6-4Z" fill="#5a63c9"/><path d="M8 0l9 5v7l-5-1V7L7 5Z" fill="#4ab0e6"/><path d="M17 11l-8 7-6-3 8-5Z" fill="#a675d6"/><path d="M9 5.500 12 7.300v3.500L9 12.500 6 10.800V7.300Z" fill="#f7f7f7"/></svg>
  <svg class="mt-[24px] w-[18px] h-[18px]" viewBox="0 0 18 18"><rect x="4" y="1" width="13" height="12" rx="1" fill="#37b4ee"/><path d="M4 8l13-1v9q0 1-1 1H5Z" fill="#1a7fd1"/><rect y="3.500" width="11" height="11" rx="1" fill="#0f69bf"/><circle cx="5.500" cy="9" r="2.700" fill="none" stroke="#fff" stroke-width="1.500"/></svg>
  <svg class="mt-[24px] w-[19px] h-[18px]" viewBox="0 0 19 18"><rect x="1" width="13" height="13" rx="2" fill="#8b5cf0"/><circle cx="11" cy="4" r="1.500" fill="#fff"/><path d="M1 11l6-5 6 5-3 3H3Z" fill="#22a06b"/><path d="M18 7l-7 7" stroke="#5b67e6" stroke-width="3"/><path d="M11 12l2 2q-1 4-5 4Z" fill="#f8b62c"/><path d="M1 16q3-2 5 1" fill="none" stroke="#22a06b" stroke-width="1.500"/></svg>
  <svg class="mt-[24px] w-[18px] h-[18px]" viewBox="0 0 18 18"><path d="M0 4 18 3 13 16 8 12 4 14 3 9Z" fill="#3aa1ef"/><path d="M18 3 3 8v3l3 1Z" fill="#f0a52c"/><path d="M18 3 8 11l5 4Z" fill="#2c7be0"/></svg>
  <svg class="mt-[24px] w-[18px] h-[18px]" viewBox="0 0 18 18"><rect x="7" y="12" width="4" height="6" rx="1" fill="#f0a830"/><path d="M9 0q6 5 8 11 1 3-2 3H3q-3 0-2-3 2-6 8-11Z" fill="#1c8a43"/></svg>
  <svg class="mt-[30px] w-3 h-3" viewBox="0 0 12 12" stroke="#222"><path d="M6 0v12M0 6h12"/></svg>
  <div class="mt-auto w-7 h-px bg-[#b9b9b9]"></div>
  <svg class="mt-[17px] w-[14px] h-[14px]" viewBox="0 0 14 14" fill="none" stroke="#111" stroke-width="1.200"><rect x=".7" y="1.200" width="12.600" height="11.600" rx="2"/><path d="M9.500 1v12"/></svg>
  <svg class="mt-[26px] mb-[14px] w-[18px] h-[18px]" viewBox="0 0 18 18" fill="none" stroke="#111" stroke-width="1.300" stroke-linejoin="round"><circle cx="9" cy="9" r="2"/><path d="M7.500 1h3l.6 2.400 1.500.9 2.400-.7 1.500 2.600L14.700 8v2l1.800 1.800-1.500 2.600-2.400-.7-1.500.9-.6 2.400h-3l-.6-2.400-1.500-.9-2.400.7-1.500-2.600L3.300 10V8L1.500 6.200 3 3.600l2.400.7 1.500-.9Z"/></svg>
</aside>
</div>
<!-- top edge of the system taskbar -->
<div class="h-[2px] shrink-0 bg-[#2d2d2d] flex"><div class="w-9"></div><div class="w-[258px] bg-[#efefef]"></div><div class="w-[39px]"></div><div class="w-[104px] bg-[#5a5a5a]"></div></div>
</body>
</html>
